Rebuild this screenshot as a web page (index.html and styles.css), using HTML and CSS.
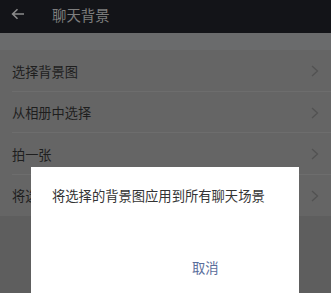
FILE: index.html
```html
<!DOCTYPE html>
<html lang="zh-CN">
<head>
<meta charset="utf-8">
<link rel="stylesheet" href="styles.css">
</head>
<body>
<div class="page">
  <header class="topbar">
    <svg class="back" width="14" height="12" viewBox="0 0 14 12"><path d="M13 6H1.8M6.5 1.2L1.6 6l4.9 4.8" fill="none" stroke="#8a8a8a" stroke-width="1.6"/></svg>
    <span class="title">聊天背景</span>
  </header>
  <div class="gap"></div>
  <ul class="list">
    <li class="row r1"><span>选择背景图</span><svg class="chev" width="8" height="12" viewBox="0 0 8 12"><path d="M1 1l5.5 5L1 11" fill="none" stroke="#525252" stroke-width="1.3"/></svg></li>
    <li class="row r2"><span>从相册中选择</span><svg class="chev" width="8" height="12" viewBox="0 0 8 12"><path d="M1 1l5.5 5L1 11" fill="none" stroke="#525252" stroke-width="1.3"/></svg></li>
    <li class="row r1"><span>拍一张</span><svg class="chev" width="8" height="12" viewBox="0 0 8 12"><path d="M1 1l5.5 5L1 11" fill="none" stroke="#525252" stroke-width="1.3"/></svg></li>
    <li class="row r2 last"><span>将选择的背景图应用到所有聊天场景</span><svg class="chev" width="8" height="12" viewBox="0 0 8 12"><path d="M1 1l5.5 5L1 11" fill="none" stroke="#525252" stroke-width="1.3"/></svg></li>
  </ul>
  <div class="dialog">
    <p class="msg">将选择的背景图应用到所有聊天场景</p>
    <div class="actions"><span class="btn">取消</span></div>
  </div>
</div>
</body>
</html>
```
FILE: styles.css
```css
html, body {
  margin: 0;
  padding: 0;
}
body {
  width: 331px;
  height: 293px;
  overflow: hidden;
  background: #5e5e5e;
  font-family: "Noto Sans CJK SC", "Noto Sans", sans-serif;
}
.page {
  position: relative;
  width: 331px;
  height: 293px;
  overflow: hidden;
}
.topbar {
  height: 33px;
  background: #131418;
  display: flex;
  align-items: center;
}
.back {
  margin-left: 11px;
  margin-top: -6px;
}
.title {
  margin-left: 27px;
  margin-top: -5px;
  font-size: 14.4px;
  color: #7e7e7e;
}
.gap {
  height: 17px;
  background: #6a6b6c;
}
.list {
  list-style: none;
  margin: 0;
  padding: 0;
  background: #656565;
}
.row {
  position: relative;
  display: flex;
  align-items: center;
  justify-content: space-between;
  padding: 0 12px 0 12px;
  font-size: 13.2px;
  color: #1e1e1e;
  white-space: nowrap;
}
.r1 { height: 42px; }
.r2 { height: 41px; }
.row::after {
  content: "";
  position: absolute;
  left: 12px;
  right: 0;
  bottom: 0;
  height: 1px;
  background: #6d6d6d;
}
.row.last::after { display: none; }
.chev { flex: none; }
.dialog {
  position: absolute;
  left: 31px;
  top: 167px;
  width: 268px;
  height: 140px;
  background: #ffffff;
}
.msg {
  margin: 0;
  padding: 19px 0 0 21px;
  font-size: 13.3px;
  line-height: 20px;
  color: #333333;
  white-space: nowrap;
}
.actions {
  display: flex;
  padding: 52px 0 0 161px;
}
.btn {
  font-size: 13.3px;
  line-height: 20px;
  color: #5a6d9b;
}
```
